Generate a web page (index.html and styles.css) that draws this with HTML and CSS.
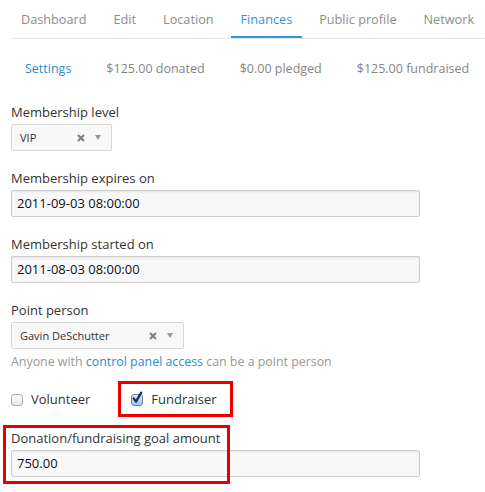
FILE: index.html
```html
<!DOCTYPE html>
<html>
<head>
<meta charset="utf-8">
<link rel="stylesheet" href="styles.css">
</head>
<body>
<div class="page">
  <ul class="tabs">
    <li><a class="tab">Dashboard</a></li>
    <li><a class="tab">Edit</a></li>
    <li><a class="tab">Location</a></li>
    <li><a class="tab active">Finances</a></li>
    <li><a class="tab">Public profile</a></li>
    <li><a class="tab">Network</a></li>
  </ul>
  <ul class="subnav">
    <li><a class="pill active">Settings</a></li>
    <li><a class="pill">$125.00 donated</a></li>
    <li><a class="pill">$0.00 pledged</a></li>
    <li><a class="pill">$125.00 fundraised</a></li>
  </ul>
  <form class="form">
    <div class="field">
      <label class="label">Membership level</label>
      <div class="select select-level">
        <span class="select-value">VIP</span>
        <svg class="select-clear" viewBox="0 0 8 8" width="8" height="8"><path d="M1 1 L7 7 M7 1 L1 7" stroke="#7d7d7d" stroke-width="2" stroke-linecap="butt"/></svg>
        <span class="select-arrow"></span>
      </div>
    </div>
    <div class="field">
      <label class="label">Membership expires on</label>
      <div class="input">2011-09-03 08:00:00</div>
    </div>
    <div class="field">
      <label class="label">Membership started on</label>
      <div class="input">2011-08-03 08:00:00</div>
    </div>
    <div class="field field-person">
      <label class="label">Point person</label>
      <div class="select select-person">
        <span class="select-value">Gavin DeSchutter</span>
        <svg class="select-clear" viewBox="0 0 8 8" width="8" height="8"><path d="M1 1 L7 7 M7 1 L1 7" stroke="#7d7d7d" stroke-width="2" stroke-linecap="butt"/></svg>
        <span class="select-arrow"></span>
      </div>
      <p class="help">Anyone with <a class="link">control panel access</a> can be a point person</p>
    </div>
    <div class="checks">
      <label class="check"><span class="box"></span>Volunteer</label>
      <label class="check highlight"><span class="box checked"><svg viewBox="0 0 12 14" width="12" height="14"><path d="M2.6 7.4 L5 10.6 L10.2 1.6" fill="none" stroke="#1c2f5c" stroke-width="2.3" stroke-linecap="round" stroke-linejoin="round"/></svg></span>Fundraiser</label>
    </div>
    <div class="goal">
      <label class="label">Donation/fundraising goal amount</label>
      <div class="input">750.00</div>
      <div class="goal-mark"></div>
    </div>
  </form>
</div>
</body>
</html>
```
FILE: styles.css
```css
* { box-sizing: border-box; }
html, body { margin: 0; padding: 0; background: #fff; }
body {
  font-family: "Open Sans", "Liberation Sans", sans-serif;
  font-size: 13px;
  color: #333;
}
.page { padding: 0 0 14px 11px; white-space: nowrap; }
ul { list-style: none; margin: 0; padding: 0; }

.tabs {
  display: flex;
  gap: 7px;
  border-bottom: 1px solid #e8e8e8;
  height: 39px;
  font-size: 12.7px;
}
.tab {
  display: block;
  padding: 10px 10px 0;
  height: 38px;
  line-height: 18px;
  color: #8c8c8c;
  border-bottom: 2px solid transparent;
}
.tab.active { color: #2a9ad1; border-bottom-color: #2a9ad1; }

.subnav {
  display: flex;
  gap: 7px;
  margin-top: 19px;
  height: 22px;
  font-size: 12.5px;
}
.pill { display: block; padding: 0 14px; line-height: 22px; color: #858585; }
.pill.active { color: #2a8cc8; }

.form { margin-top: 23px; }
.field { margin-bottom: 18px; }
.label {
  display: block;
  line-height: 18px;
  margin-bottom: 3px;
  color: #333;
}
.input {
  width: 409px;
  height: 27px;
  border: 1px solid #cfcfcf;
  border-radius: 2px;
  background: #f8f8f8;
  box-shadow: inset 0 1px 2px rgba(0,0,0,0.08);
  padding: 0 5px;
  line-height: 25px;
  color: #111;
}
.select {
  display: flex;
  align-items: center;
  height: 27px;
  border: 1px solid #d8d8d8;
  border-radius: 2px;
  background: #f8f8f8;
  padding: 0 0 0 8px;
  font-size: 11px;
  color: #333;
}
.select-level { width: 101px; }
.select-person { width: 173px; }
.select-value { flex: 1; }
.select-clear { margin-right: 10px; }
.select-arrow {
  width: 0; height: 0;
  border-left: 3.5px solid transparent;
  border-right: 3.5px solid transparent;
  border-top: 5px solid #999;
  margin-right: 10px;
}
.field-person { margin-bottom: 10px; }
.help { margin: 4px 0 0; color: #999; line-height: 18px; font-size: 12.4px; }
.link { color: #2a8cc8; }

.checks { display: flex; align-items: center; height: 36px; }
.check { display: flex; align-items: center; }
.check:first-child { margin-right: 28px; }
.box {
  width: 12px; height: 12px;
  border: 1px solid #b0b0b0;
  border-radius: 3px;
  background: linear-gradient(#fdfdfd, #e8e8e8);
  margin-right: 8px;
  position: relative;
  top: 1px;
}
.box.checked { background: linear-gradient(#dfe8f7, #a9c3ea); border-color: #6b84b0; }
.box svg { position: absolute; left: -1px; top: -4px; }
.highlight {
  border: 3px solid #e80000;
  padding: 0 13px 0 10px;
  height: 36px;
}
.goal { position: relative; margin-top: 8px; padding-top: 4px; }
.goal-mark {
  position: absolute;
  left: -8px; top: 0;
  width: 227px; height: 59px;
  border: 3px solid #e80000;
}
```
